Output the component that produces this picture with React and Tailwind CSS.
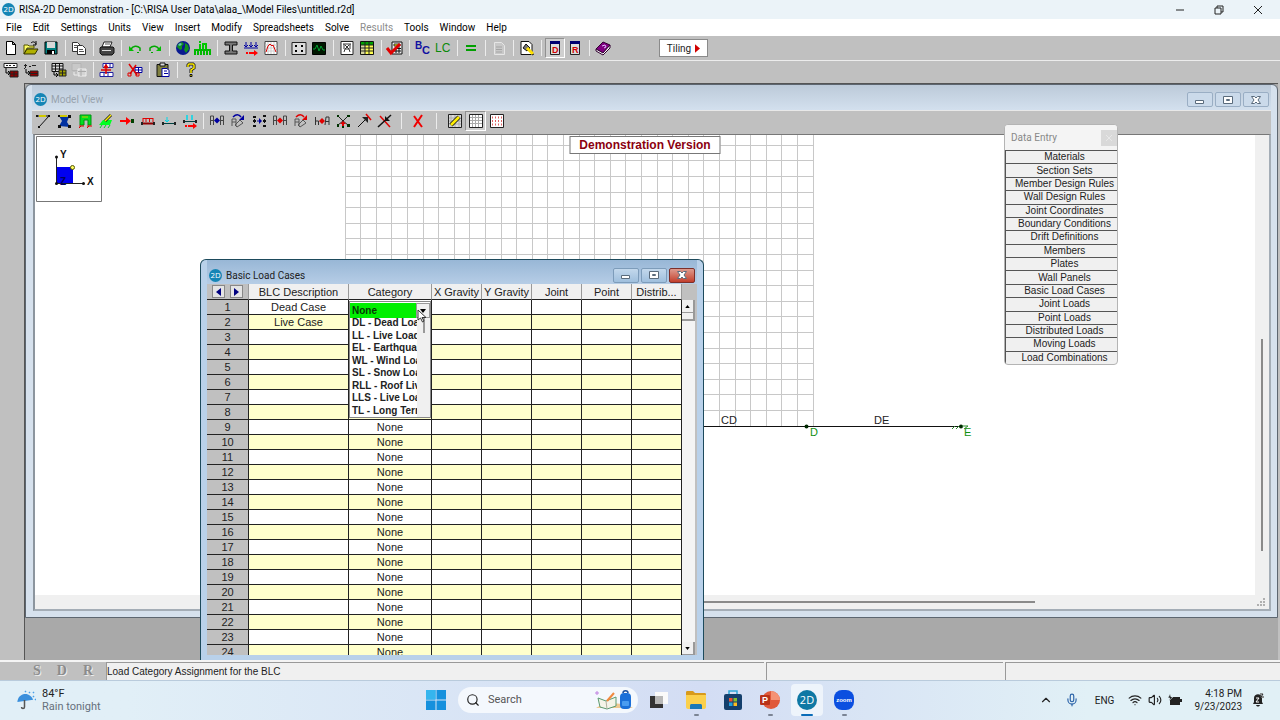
import { useState } from 'react';
import clsx from 'clsx';
import { ChevronUp, Mic, Search, Volume2, Wifi } from 'lucide-react';

const MENU = ['File', 'Edit', 'Settings', 'Units', 'View', 'Insert', 'Modify', 'Spreadsheets', 'Solve', 'Results', 'Tools', 'Window', 'Help'];

const DATA_ENTRY = [
    'Materials',
    'Section Sets',
    'Member Design Rules',
    'Wall Design Rules',
    'Joint Coordinates',
    'Boundary Conditions',
    'Drift Definitions',
    'Members',
    'Plates',
    'Wall Panels',
    'Basic Load Cases',
    'Joint Loads',
    'Point Loads',
    'Distributed Loads',
    'Moving Loads',
    'Load Combinations',
];

const CATEGORIES = [
    'DL - Dead Load',
    'LL - Live Load',
    'EL - Earthquake',
    'WL - Wind Load',
    'SL - Snow Load',
    'RLL - Roof Live',
    'LLS - Live Load',
    'TL - Long Term',
];

const COLUMNS = ['BLC Description', 'Category', 'X Gravity', 'Y Gravity', 'Joint', 'Point', 'Distrib...'];

const ROWS = Array.from({ length: 24 }, (_, i) => ({
    no: i + 1,
    description: ['Dead Case', 'Live Case'][i] || '',
    category: i < 8 ? '' : 'None',
}));

// '|' is a separator
const MAIN_TOOLS = [
    'new', 'open', 'save', '|', 'copy', '|', 'print', '|', 'undo', 'redo', '|', 'globe', 'units', '|',
    'section', 'loads', 'graph', '|', 'joints', 'scope', '|', 'frame', 'sheet', '|', 'solve', '|',
    'bc', 'lc', '|', 'equal', '|', 'report', '|', 'editdoc', '|', 'dataD', 'dataR', '|', 'book',
];
const SHEET_TOOLS = ['fill', 'math', '|', 'insertRow', 'deleteRow', '|', 'sort', '|', 'cut', '|', 'paste', '|', 'help'];
const DRAW_TOOLS = ['member', 'plate', 'wall', 'boundary', 'jointLoad', 'distLoad', 'pointLoad', 'movingLoad'];
const MODIFY_TOOLS = ['copyA', 'rotateA', 'mirror', 'moveA', 'rotateB', 'scaleA', 'merge', 'extend', 'trim'];

const letter = { fontFamily: 'Liberation Sans, Arial, sans-serif', fontWeight: 700 };

const ICONS = {
    new: <path d="M3.5 1.5h6l3 3v10h-9zM9.5 1.5v3h3" fill="#fff" stroke="#000" />,
    open: (
        <>
            <path d="M1 5h4l1 1h5v2H4l-3 6z" fill="#ffff66" stroke="#555500" />
            <path d="M4 9h11l-3 5H1z" fill="#b0b000" stroke="#333300" />
            <path d="M8 3c2-2 4-1 5 1M13 1v4h-3" fill="none" stroke="#000" />
        </>
    ),
    save: (
        <>
            <path d="M2 2h12v12H2z" fill="#008080" stroke="#000" />
            <path d="M4 2h8v6H4z" fill="#d8d8d8" />
            <path d="M4 10h8v4H4z" fill="#000" />
            <path d="M9 11h2v3H9z" fill="#fff" />
        </>
    ),
    copy: (
        <>
            <path d="M1.5 2.5h5l3 3v6h-8z" fill="#fff" stroke="#333" />
            <path d="M3 5.5h3M3 7.5h3" stroke="#555" />
            <path d="M6.5 5.5h5l3 3v6h-8z" fill="#fff" stroke="#333" />
            <path d="M8 9.5h4M8 11.5h5" stroke="#555" />
        </>
    ),
    print: (
        <>
            <path d="M5 2h8l-2 5H3z" fill="#fff" stroke="#222" />
            <path d="M2 7h12l1 1v5l-2 2H3l-2-2V8z" fill="#444" stroke="#111" />
            <path d="M3 10h9v1H3z" fill="#ddd" />
            <path d="M6 4h5" stroke="#555" />
        </>
    ),
    undo: (
        <>
            <path d="M2 6v5h5z" fill="#00c000" />
            <path d="M4 9c2-3 6-4 9-1v3" fill="none" stroke="#00a800" strokeWidth="1.5" />
            <path d="M10 12.500h2" stroke="#00a800" />
        </>
    ),
    redo: (
        <>
            <path d="M14 6v5H9z" fill="#00c000" />
            <path d="M12 9C10 6 6 5 3 8v3" fill="none" stroke="#00a800" strokeWidth="1.5" />
            <path d="M4 12.500h2" stroke="#00a800" />
        </>
    ),
    globe: (
        <>
            <circle cx="8" cy="8" r="7" fill="#0a1a90" />
            <path d="M3 4l4-2 2 2-2 2v3l-2 1-3-3zM10 3l3 2 1 4-3 4-2-3 1-3z" fill="#109020" />
            <path d="M5 3l2 1-2 2-2-1z" fill="#60c0c0" />
        </>
    ),
    units: (
        <>
            <path d="M5 1v2M5 4v5M8 9V4h3v5" fill="none" stroke="#00c800" strokeWidth="2" />
            <path d="M0 15v-5h15v5M3 15v-4M6 15v-4M9 15v-4M12 15v-4" fill="none" stroke="#00b800" strokeWidth="2" />
        </>
    ),
    section: <path d="M2 2h12v3H9.500v6H14v3H2v-3h4.500V5H2z" fill="#777" stroke="#111" />,
    loads: (
        <>
            <path d="M1 8h14M3 2v5M8 2v5M13 2v5M1 5l2 2 2-2M6 5l2 2 2-2M11 5l2 2 2-2" fill="none" stroke="#0000a0" />
            <path d="M3 13h2M6 13h5" stroke="#f00" strokeWidth="2" />
            <path d="M11 10l4 3-4 3z" fill="#f00" />
        </>
    ),
    graph: (
        <>
            <path d="M2 1.500h12v13H2z" fill="#fff" stroke="#444" />
            <path d="M2 5h12M2 8h12M2 11h12M5 2v12M8 2v12M11 2v12" stroke="#ccc" />
            <path d="M3 12l2-6 2-2 2 2 1-1 3 7" fill="none" stroke="#e00000" />
        </>
    ),
    joints: (
        <>
            <path d="M1 2.500h14v12H1z" fill="#ddd" stroke="#222" />
            <path d="M4 5h2v2H4zM10 5h2v2h-2zM4 10h2v2H4zM10 10h2v2h-2z" fill="#000" />
        </>
    ),
    scope: (
        <>
            <path d="M1.500 2.500h13v12h-13z" fill="#001800" stroke="#000" />
            <path d="M2 9h2l2-4 2 6 2-5 2 4h2" fill="none" stroke="#00a030" />
        </>
    ),
    frame: (
        <>
            <path d="M2 1.500h12v13H2z" fill="#fff" stroke="#222" />
            <path d="M4 4h8M5 12l1-3h4l1 3M5 4v5M11 4v5M6 9l4-4M10 9L6 5" fill="none" stroke="#333" />
        </>
    ),
    sheet: (
        <>
            <path d="M1.500 1.500h13v13h-13z" fill="#ffff50" stroke="#111" />
            <path d="M2 2h4v12H2z" fill="#d8d8a0" />
            <path d="M2 2h12v3H2z" fill="#00a000" />
            <path d="M2 5h12M2 8h12M2 11h12M6 2v12M10 2v12" stroke="#222" />
        </>
    ),
    solve: (
        <>
            <path d="M5 2h10v12H5z" fill="#eee" stroke="#111" />
            <path d="M7 4h6v2H7z" fill="#ff0" stroke="#333" />
            <path d="M7 8.500h7M7 11h7M9 7v6M12 7v6" stroke="#111" />
            <path d="M0 8l4 5 9-9" fill="none" stroke="#e00000" strokeWidth="3" />
        </>
    ),
    bc: (
        <g fill="#1010a0" style={letter}>
            <text x="0" y="9" fontSize="10">B</text>
            <text x="7" y="14" fontSize="11">C</text>
        </g>
    ),
    lc: (
        <text x="0" y="12" fontSize="12" fill="#0a8a0a" style={{ ...letter, fontWeight: 400 }}>LC</text>
    ),
    equal: <path d="M3 6h10M3 10h10" stroke="#00a000" strokeWidth="2" />,
    report: (
        <>
            <path d="M3.500 2.500h7l3 3v9h-10z" fill="#c8c8c8" stroke="#e6e6e6" />
            <path d="M5 7h6M5 9.500h6M5 12h6" stroke="#a4a4a4" />
        </>
    ),
    editdoc: (
        <>
            <path d="M2 1.500h8l3 3v10H2z" fill="#fff" stroke="#111" />
            <path d="M4 8l3-4 4 4-3 3z" fill="#777" stroke="#111" />
            <path d="M8 8l6 6" stroke="#ffe000" strokeWidth="3" />
            <path d="M13 15l2-1" stroke="#222" />
        </>
    ),
    dataD: (
        <>
            <path d="M3.500 1.500h9v13h-9z" fill="#ddd" stroke="#222" />
            <path d="M3 1h10v3H3z" fill="#000070" />
            <text x="5" y="13" fontSize="9" fill="#d00000" style={letter}>D</text>
        </>
    ),
    dataR: (
        <>
            <path d="M3.500 1.500h9v13h-9z" fill="#ddd" stroke="#222" />
            <path d="M3 1h10v3H3z" fill="#000070" />
            <text x="5" y="13" fontSize="9" fill="#d00000" style={letter}>R</text>
        </>
    ),
    book: (
        <>
            <path d="M1 9l7-7 7 3-7 8z" fill="#800080" stroke="#300030" />
            <path d="M1 9l7 4 7-8v3l-7 7-7-4z" fill="#fff" stroke="#300030" />
            <path d="M7 6l3-1 1 2-2 1" fill="none" stroke="#e0c0ff" />
        </>
    ),
    fill: (
        <>
            <path d="M1 1.500h13v4H1z" fill="#fff" stroke="#222" />
            <path d="M3 3.500h2M6 3.500h2M10 3.500h2" stroke="#222" />
            <path d="M3 6v5h3M5 9l2 2-2 2" fill="none" stroke="#000" />
            <path d="M7 9h8v6H7z" fill="#900000" stroke="#222" />
            <path d="M7 12h8M11 9v6" stroke="#222" />
        </>
    ),
    math: (
        <>
            <path d="M1 3.500h3M2.500 2v3M6 4.500h2M9 3.500h4M1 7l2-2" stroke="#222" />
            <path d="M3 7v4h3M5 9l2 2-2 2" fill="none" stroke="#000" />
            <path d="M7 9h8v5H7z" fill="#900000" stroke="#222" />
            <path d="M7 11.500h8" stroke="#222" />
        </>
    ),
    insertRow: (
        <>
            <path d="M1 1.500h11v8H1z" fill="#ddd" stroke="#111" />
            <path d="M1 4h11M1 7h11M4.500 1v8M8.500 1v8" stroke="#111" />
            <path d="M3 10v3h3M5 11l2 2-2 2" fill="none" stroke="#000" />
            <path d="M8 8h7v6H8z" fill="#a0a000" stroke="#222" />
            <path d="M8 11h7M11.500 8v6" stroke="#222" />
        </>
    ),
    deleteRow: (
        <>
            <path d="M1 1.500h9v7H1z" fill="#c8c8c8" stroke="#b4b4b4" />
            <path d="M3 10v3h3" fill="none" stroke="#eee" />
            <path d="M7 7h8v7H7z" fill="#d4d4d4" stroke="#eee" />
            <path d="M7 9.500h8M10 7v7" stroke="#aaa" />
        </>
    ),
    sort: (
        <>
            <path d="M4 1.500h10v4H4zM1 10.500h13v4H1z" fill="#fff" stroke="#2020a0" />
            <path d="M7 1v4M11 1v4M5 10v4M9 10v4" stroke="#2020a0" />
            <path d="M2 8h10M7 4v8M5 6l2-3 2 3" fill="none" stroke="#e00000" strokeWidth="1.5" />
        </>
    ),
    cut: (
        <>
            <path d="M8 5.500h7v5H8z" fill="#fff" stroke="#0000a0" />
            <path d="M8 8h7M11.500 5v5" stroke="#0000a0" />
            <path d="M2 2l8 11M9 3L3 12" stroke="#e00000" strokeWidth="1.5" />
            <path d="M1 11h3v3H1zM9 11h3v3H9z" fill="none" stroke="#e00000" />
        </>
    ),
    paste: (
        <>
            <path d="M2 2.500h11v12H2z" fill="#808040" stroke="#111" />
            <path d="M5 1h5v3H5z" fill="#ddd" stroke="#111" />
            <path d="M7 6.500h5l2 2v6H7z" fill="#fff" stroke="#0000a0" />
            <path d="M9 9h3M9 11.500h4" stroke="#0000a0" />
        </>
    ),
    help: (
        <>
            <path d="M5 5V3l1-1h4l1 1v3L8 8v3" fill="none" stroke="#111" strokeWidth="3" />
            <path d="M5 5V3l1-1h4l1 1v3L8 8v3" fill="none" stroke="#ffee00" strokeWidth="1.5" />
            <path d="M7 12.500h2v2H7z" fill="#ffee00" stroke="#111" />
        </>
    ),
    member: (
        <>
            <path d="M2 3h12L4 14" fill="none" stroke="#111" />
            <path d="M4 3h7" stroke="#d0c800" strokeWidth="2" />
            <path d="M1 2h2v2H1zM13 2h2v2h-2zM3 13h2v2H3z" fill="#111" />
        </>
    ),
    plate: (
        <>
            <path d="M3 3l10 1-2 5 3 5-11-1 3-5z" fill="#0030a0" />
            <path d="M4 3h7" stroke="#d0c800" strokeWidth="2" />
            <path d="M2 2h2v2H2zM12 2h3v3h-3zM2 12h3v3H2zM12 12h3v3h-3z" fill="#111" />
        </>
    ),
    wall: (
        <>
            <path d="M3 2h11v10h-3V7H7v5H3z" fill="#00e020" stroke="#009010" />
            <path d="M2 13h5M2 15l2-2M10 13h5M10 15l2-2" stroke="#e00000" />
            <path d="M5 4h6" stroke="#d0c800" />
        </>
    ),
    boundary: (
        <>
            <path d="M1 12l4-5h9l-2 5z" fill="#00ff20" />
            <path d="M2 15l2-3M6 15l2-3M10 15l2-3" stroke="#00d020" />
            <path d="M7 8l6-6" stroke="#222" strokeWidth="3" />
            <path d="M7 8l6-6" stroke="#ffee00" strokeWidth="1.5" />
        </>
    ),
    jointLoad: (
        <>
            <path d="M1 8h7" stroke="#f00" strokeWidth="2" />
            <path d="M7 4l5 4-5 4z" fill="#f00" />
            <path d="M12 6h3v4h-3z" fill="#004000" />
        </>
    ),
    distLoad: (
        <>
            <path d="M3 5.500h10M3 5v4M6 5v4M9.500 5v4M13 5v4" fill="none" stroke="#e00000" />
            <path d="M2 10.500h12" stroke="#900000" strokeWidth="2" />
            <path d="M1 9h2v3H1zM13 9h2v3h-2z" fill="#222" />
        </>
    ),
    pointLoad: (
        <>
            <path d="M6 4v5M4 7l2 2 2-2" fill="none" stroke="#00d8e8" />
            <path d="M2 10.500h12" stroke="#004040" />
            <path d="M1 9h2v3H1zM13 9h2v3h-2z" fill="#222" />
        </>
    ),
    movingLoad: (
        <>
            <path d="M5 2v5M10 2v5" stroke="#00d8e8" strokeWidth="1.5" />
            <path d="M1 8.500h14" stroke="#004040" />
            <path d="M1 7h2v3H1zM13 7h2v3h-2z" fill="#222" />
            <path d="M3 13h2M6 13h5" stroke="#f00" strokeWidth="2" />
            <path d="M11 10l4 3-4 3z" fill="#f00" />
        </>
    ),
    copyA: (
        <>
            <path d="M1.500 12V3h3v9M1.500 7.500h3M11.500 12V3h3v9M11.500 7.500h3" fill="none" stroke="#444" />
            <path d="M8 4.500l3 3-3 3-3-3z" fill="#0000a0" />
        </>
    ),
    rotateA: (
        <>
            <path d="M2 13V6h4v7M2 9h4M7 14l6-4-3-3-5 5z" fill="none" stroke="#555" />
            <path d="M3 4c3-3 6-3 8 0" fill="none" stroke="#0000a0" strokeWidth="1.5" />
            <path d="M14 2v5H9z" fill="#0000a0" />
        </>
    ),
    mirror: (
        <>
            <path d="M2 3h3v2H2zM2 7h3v2H2zM2 12h3v2H2zM12 2h3v2h-3zM12 7h3v2h-3zM12 12h3v2h-3z" fill="#111" />
            <path d="M3.500 3v10M13.500 3v10" stroke="#111" strokeDasharray="1 2" />
            <path d="M6 8h3" stroke="#0000a0" />
            <path d="M8 5l3 3-3 3z" fill="#0000a0" />
        </>
    ),
    moveA: (
        <>
            <path d="M1.500 12V3h3v9M1.500 7.500h3M11.500 12V3h3v9M11.500 7.500h3" fill="none" stroke="#444" />
            <path d="M8 4.500l3 3-3 3-3-3z" fill="#e00000" />
        </>
    ),
    rotateB: (
        <>
            <path d="M2 13V6h4v7M2 9h4M7 14l6-4-3-3-5 5z" fill="none" stroke="#555" />
            <path d="M3 4c3-3 6-3 8 0" fill="none" stroke="#e00000" strokeWidth="1.5" />
            <path d="M14 2v5H9z" fill="#e00000" />
        </>
    ),
    scaleA: (
        <>
            <path d="M1.500 12V4M1.500 8h3v4M11 12l1-8h3v8M11 8.500h4" fill="none" stroke="#333" />
            <path d="M8 5l3 3-3 3-3-3z" fill="#e00000" />
        </>
    ),
    merge: (
        <>
            <path d="M3 3l5 5 5-5M3 12l5-4 5 4" fill="none" stroke="#222" />
            <path d="M2 2h2v2H2zM12 2h3v2h-3zM2 11h2v3H2zM12 11h3v3h-3zM7 13h2v2H7z" fill="#003000" />
            <path d="M8 8l3 3H9v2H7v-2H5z" fill="#e00000" />
        </>
    ),
    extend: (
        <>
            <path d="M2 14l8-8" fill="none" stroke="#111" />
            <path d="M6 4h6v6z" fill="#222" />
            <path d="M10 1l5 6" stroke="#e00000" strokeWidth="1.5" />
        </>
    ),
    trim: (
        <>
            <path d="M3 3l10 11" stroke="#e00000" strokeWidth="1.5" />
            <path d="M1 14L14 2" fill="none" stroke="#111" strokeWidth="1.5" />
            <path d="M8 3v5h5z" fill="#111" />
        </>
    ),
    remove: <path d="M4 3l8 11M12 2L4 14" stroke="#f00000" strokeWidth="2" />,
    drawGrid: (
        <>
            <path d="M1.500 1.500h13v13h-13z" fill="#ddd" stroke="#222" />
            <path d="M4 2v12M8 2v12M12 2v12M2 5h12M2 8h12M2 11h12" stroke="#aaa" />
            <path d="M4 12l8-8" stroke="#222" strokeWidth="4.500" />
            <path d="M4 12l8-8" stroke="#ffee00" strokeWidth="2.500" />
        </>
    ),
    grid: (
        <>
            <path d="M1.500 1.500h13v13h-13z" fill="#fff" stroke="#222" />
            <path d="M4.500 2v12M7.500 2v12M10.500 2v12M2 4.500h12M2 7.500h12M2 10.500h12" stroke="#aaa" />
        </>
    ),
    snap: (
        <>
            <path d="M1.500 1.500h13v13h-13z" fill="#fff" stroke="#222" />
            <path d="M3 4.500h11M3 8h11M3 11.500h11" stroke="#e06060" strokeDasharray="1 2" strokeWidth="2" />
        </>
    ),
};

const ToolButton = ({ name, pressed, className }) => (
    <button
        type="button"
        aria-label={name}
        className={clsx(
            'flex h-5 shrink-0 items-center justify-center',
            pressed && 'border border-t-[#909090] border-r-white border-b-white border-l-[#909090] bg-[#cfcfcf]',
            className
        )}
    >
        <svg viewBox="0 0 16 16" className="h-4 w-4 shrink-0 overflow-visible">
            {ICONS[name]}
        </svg>
    </button>
);

const Separator = ({ className = 'w-2' }) => (
    <div className={clsx('flex h-4 shrink-0 justify-center', className)}>
        <div className="w-px bg-[#ececec]" />
    </div>
);

const Toolbar = ({ tools, className }) => (
    <div className={clsx('flex items-center bg-[#c0c0c0] pl-px', className)}>
        {tools.map((tool, i) =>
            tool === '|' ? <Separator key={i} /> : <ToolButton key={i} name={tool} pressed={tool === 'dataD'} className="w-5" />
        )}
        {tools.includes('book') && (
            <button
                type="button"
                className="ml-[46px] flex h-[18px] w-[49px] items-center justify-center gap-1 border border-[#8a8a8a] bg-white text-[10px] text-[#222]"
            >
                Tiling
                <svg viewBox="0 0 6 10" className="h-[9px] w-[5px]">
                    <path d="M0 0l6 5-6 5z" fill="#d00000" />
                </svg>
            </button>
        )}
    </div>
);

const AppLogo = ({ className = 'h-[13px] w-[13px]' }) => (
    <svg viewBox="0 0 20 20" className={clsx('shrink-0', className)} aria-hidden="true">
        <circle cx="10" cy="10" r="10" fill="#1585b5" />
        <text x="10" y="14" fontSize="12" textAnchor="middle" fill="#fff" fontFamily="Open Sans, sans-serif">2D</text>
    </svg>
);

const WindowButtons = ({ active }) => (
    <div className="flex gap-0.5">
        {['minimize', 'maximize', 'close'].map((kind) => (
            <button
                key={kind}
                type="button"
                aria-label={kind}
                className={clsx(
                    'flex h-[15px] w-[26px] items-center justify-center rounded-xs border',
                    active && kind === 'close'
                        ? 'border-[#7c2f2a] bg-linear-to-b from-[#dd9a8e] to-[#c23c2b]'
                        : active
                          ? 'border-[#7d9cba] bg-linear-to-b from-[#c3d8ec] to-[#9fbfdd]'
                          : 'border-[#9aaec4] bg-[#cbdaea]'
                )}
            >
                <svg viewBox="0 0 12 10" className="h-[10px] w-3" fill="#fff" stroke="#5a6b7c">
                    {kind === 'minimize' && <path d="M1.500 5.500h8v3h-8z" />}
                    {kind === 'maximize' && <path d="M1.500 1.500h9v7h-9zM4.500 4.500h3v1h-3z" />}
                    {kind === 'close' && <path d="M1.500 1.500h3L6 3l1.500-1.500h3L8 5l2.500 3.500h-3L6 7 4.500 8.500h-3L4 5z" />}
                </svg>
            </button>
        ))}
    </div>
);

// grid pitch of the model canvas
const PITCH = 15.6;

const ModelCanvas = () => (
    <div className="relative min-w-0 flex-1 overflow-hidden bg-white">
        <svg className="block h-full w-full" fontFamily="Liberation Sans, Arial, sans-serif">
            <g stroke="#c8c8c8" shapeRendering="crispEdges">
                {Array.from({ length: 31 }, (_, i) => (
                    <line key={i} x1={310 + i * PITCH} x2={310 + i * PITCH} y1="0" y2="291" />
                ))}
                {Array.from({ length: 18 }, (_, i) => (
                    <line key={i} x1="310" x2="778" y1={291 - (i + 1) * PITCH} y2={291 - (i + 1) * PITCH} />
                ))}
            </g>
            <path d="M311 291.500h615" stroke="#111" />
            <circle cx="771.500" cy="291.500" r="2" fill="#002800" />
            <circle cx="926" cy="291.500" r="2" fill="#002800" />
            <path d="M917 294l3-3M921 294l3-3M929 294l4-3h-6" fill="none" stroke="#2e8b2e" />
            <g fontSize="11" fill="#222">
                <text x="686" y="289">CD</text>
                <text x="839" y="289">DE</text>
            </g>
            <g fontSize="11" fill="#119011">
                <text x="775" y="301">D</text>
                <text x="929" y="301">E</text>
            </g>
            {/* axis triad */}
            <path d="M1.500 1.500h65v65h-65z" fill="#fff" stroke="#777" />
            <path d="M21 32h17v16H21z" fill="#0000f0" />
            <path d="M21.500 22v26.500h27" fill="none" stroke="#222" />
            <circle cx="21.500" cy="22" r="1.500" fill="#111" />
            <circle cx="21.500" cy="48.500" r="1.500" fill="#111" />
            <circle cx="48.500" cy="48.500" r="1.500" fill="#111" />
            <circle cx="37.500" cy="32.500" r="2" fill="#ffff60" stroke="#555500" />
            <g fontSize="10" fontWeight="700" fill="#111">
                <text x="25" y="23">Y</text>
                <text x="52" y="50">X</text>
                <text x="25" y="50" fill="#000060">Z</text>
            </g>
        </svg>
        <div className="absolute top-px left-1/2 h-[18px] w-[151px] -translate-x-1/2 border border-[#777] bg-white text-center font-['Liberation_Sans',Arial,sans-serif] text-xs leading-4 font-bold whitespace-nowrap text-[#8b0010]">
            Demonstration Version
        </div>
    </div>
);

const ModelView = () => (
    <section className="mb-[42px] flex min-h-0 flex-1 flex-col rounded-t-md border border-[#5d6670] bg-[#d6e1ed] px-1.5 pb-1.5">
        <header className="flex h-[25px] shrink-0 items-center gap-1 bg-linear-to-b from-[#bccad9] to-[#d3e0ee] px-0.5 pt-1">
            <AppLogo />
            <h2 className="flex-1 text-[10px] text-[#98a3ae]">Model View</h2>
            <WindowButtons />
        </header>
        <div className="flex h-6 shrink-0 items-center border-t border-[#e8e8e8] bg-[#c0c0c0] pb-1">
            {DRAW_TOOLS.map((t) => <ToolButton key={t} name={t} className="w-[21px]" />)}
            <Separator className="w-1.5" />
            {MODIFY_TOOLS.map((t) => <ToolButton key={t} name={t} className="w-[21px]" />)}
            <Separator className="w-3" />
            <ToolButton name="remove" className="w-[21px]" />
            <Separator className="w-4" />
            <ToolButton name="drawGrid" className="w-[21px]" />
            <ToolButton name="grid" pressed className="w-[21px]" />
            <ToolButton name="snap" className="w-[21px]" />
        </div>
        <div className="ml-px flex min-h-0 flex-1 flex-col border-2 border-t border-[#a4adb6] border-t-[#777] border-l-[#8c959e] bg-[#f0f0f0]">
            <div className="flex min-h-0 flex-1">
                <ModelCanvas />
                <div className="flex w-[14px] flex-col items-center">
                    <div className="flex-[204]" />
                    <div className="w-0.5 flex-[212] bg-[#8a8a8a]" />
                    <div className="flex-[44]" />
                </div>
            </div>
            <div className="flex h-[14px] items-center">
                <div className="flex-[420]" />
                <div className="h-0.5 flex-[582] bg-[#8a8a8a]" />
                <div className="flex flex-[231] justify-end pr-1">
                    <svg viewBox="0 0 8 8" className="h-2 w-2" fill="#b0b0b0">
                        <path d="M6 0h2v2H6zM6 3h2v2H6zM6 6h2v2H6zM3 3h2v2H3zM3 6h2v2H3zM0 6h2v2H0z" />
                    </svg>
                </div>
            </div>
        </div>
    </section>
);

const DataEntry = () => (
    <aside className="absolute top-10 right-[160px] w-[114px] overflow-hidden rounded-sm border border-[#b4b4b4] bg-[#f0f0f0]">
        <header className="flex h-[25px] items-center justify-between bg-[#f4f4f4] pl-1.5 text-[10px] text-[#888]">
            Data Entry
            <button type="button" aria-label="Close Data Entry" className="flex h-4 w-4 items-center justify-center bg-[#d9d9d9] text-[#e8e8e8]">
                <svg viewBox="0 0 8 8" className="h-2 w-2" stroke="currentColor">
                    <path d="M1 1l6 6M7 1L1 7" />
                </svg>
            </button>
        </header>
        <div className="grid h-[214px] auto-rows-fr border-l border-[#555] font-['Liberation_Sans',Arial,sans-serif] text-[10px] leading-3 text-[#222]">
            {DATA_ENTRY.map((item) => (
                <button key={item} type="button" className="border-t border-[#555] pl-1.5 whitespace-nowrap">
                    {item}
                </button>
            ))}
        </div>
    </aside>
);

const CategoryPicker = () => {
    const [category, setCategory] = useState('None');

    return (
        <div className="absolute top-px left-0 z-10 h-[117px] w-[82px] border border-[#888] bg-white text-left text-[10px] font-bold text-[#222]">
            <div className="relative z-10 flex h-4 bg-white pt-px">
                <select
                    aria-label="Category"
                    value={category}
                    onChange={(e) => setCategory(e.target.value)}
                    className="h-[15px] w-[66px] appearance-none bg-[#00f000] pl-0.5 text-[10px] leading-[15px] font-bold text-[#063806]"
                >
                    <option>None</option>
                    {CATEGORIES.map((c) => <option key={c}>{c}</option>)}
                </select>
                <div className="flex flex-1 items-center justify-center border border-[#999] bg-[#f0f0f0]">
                    <svg viewBox="0 0 6 4" className="h-1 w-1.5">
                        <path d="M0 0h6L3 4z" fill="#000" />
                    </svg>
                </div>
            </div>
            <div className="-mt-px flex h-[100px]">
                <ul role="listbox" aria-label="Categories" className="grid w-[67px] auto-rows-fr overflow-hidden pl-0.5 leading-3">
                    {CATEGORIES.map((c) => (
                        <li key={c} role="option" aria-selected={c === category} className="whitespace-nowrap" onClick={() => setCategory(c)}>
                            {c}
                        </li>
                    ))}
                </ul>
                <div className="flex flex-1 justify-center bg-[#f0f0f0]">
                    <div className="h-4 w-0.5 bg-[#999]" />
                </div>
            </div>
            {/* mouse pointer */}
            <svg viewBox="0 0 10 14" className="absolute top-[7px] left-[67px] z-20 h-[14px] w-[10px]">
                <path d="M1 1v10l2.500-2 2 4 1.500-1-2-3.500H9z" fill="#fff" stroke="#333" />
            </svg>
        </div>
    );
};

const ScrollButton = ({ up }) => (
    <button
        type="button"
        aria-label={up ? 'Scroll up' : 'Scroll down'}
        className="flex h-[13px] items-center justify-center border-r-2 border-b border-[#999] bg-[#f0f0f0]"
    >
        <svg viewBox="0 0 6 4" className="h-[3px] w-[5px]">
            <path d={up ? 'M0 4h6L3 0z' : 'M0 0h6L3 4z'} fill="#000" />
        </svg>
    </button>
);

const BasicLoadCases = () => (
    <section className="absolute top-[175px] bottom-0 left-[175px] flex w-[504px] flex-col rounded-t-md border border-b-0 border-[#1d4a5c] bg-[#b9d1ea] px-1.5 pb-[5px]">
        <header className="flex h-[24px] shrink-0 items-center gap-1 bg-linear-to-b from-[#98b7d6] to-[#b6cde6] px-0.5 pt-1.5">
            <AppLogo />
            <h2 className="flex-1 text-[10px] text-[#222]">Basic Load Cases</h2>
            <WindowButtons active />
        </header>
        <div className="flex min-h-0 flex-1 overflow-hidden bg-[#c0c0c0]">
            <div className="min-h-0 overflow-hidden">
                <table className="w-[475px] table-fixed border-separate border-spacing-0 text-center font-['Liberation_Sans',Arial,sans-serif] text-[11px] leading-[14px] text-[#222]">
                    <colgroup>
                        <col className="w-[42px]" />
                        <col className="w-[100px]" />
                        <col className="w-[83px]" />
                        {COLUMNS.slice(2).map((c) => <col key={c} className="w-[50px]" />)}
                    </colgroup>
                    <thead>
                        <tr className="h-4">
                            <th className="border-r border-b border-[#222] border-r-[#999] bg-[#c0c0c0] p-0">
                                <div className="flex justify-center gap-[5px]">
                                    {['M6 0v8L1 4z', 'M1 0v8l5-4z'].map((d) => (
                                        <button key={d} type="button" aria-label="Change page" className="flex h-[13px] w-[13px] items-center justify-center border border-[#888] bg-[#e4e4e4]">
                                            <svg viewBox="0 0 7 8" className="h-2 w-[7px]">
                                                <path d={d} fill="#000080" />
                                            </svg>
                                        </button>
                                    ))}
                                </div>
                            </th>
                            {COLUMNS.map((c) => (
                                <th key={c} className="border-r border-b border-[#999] border-b-[#222] bg-[#f0f0f0] p-0 font-normal whitespace-nowrap">
                                    {c}
                                </th>
                            ))}
                        </tr>
                    </thead>
                    <tbody>
                        {ROWS.map((row) => (
                            <tr key={row.no} className="h-[15px] bg-white even:bg-[#ffffcc]">
                                <th scope="row" className="border-r border-b border-[#222] bg-[#c0c0c0] p-0 font-normal">{row.no}</th>
                                <td className="border-r border-b border-[#222] p-0">{row.description}</td>
                                <td className="relative border-r border-b border-[#222] p-0">
                                    {row.no === 1 ? <CategoryPicker /> : row.category}
                                </td>
                                {COLUMNS.slice(2).map((c) => <td key={c} className="border-r border-b border-[#222] p-0" />)}
                            </tr>
                        ))}
                    </tbody>
                </table>
            </div>
            <div className="mt-4 flex w-[13px] flex-col bg-[#f4f4f4]">
                <ScrollButton up />
                <div className="h-2 border-r-2 border-b-2 border-[#999] bg-[#f0f0f0]" />
                <div className="flex-1" />
                <ScrollButton />
            </div>
        </div>
    </section>
);

const StatusBar = () => (
    <footer className="flex h-5 shrink-0 border-t-2 border-[#f4f4f4] bg-[#f0f0f0] font-['Liberation_Sans',Arial,sans-serif] text-[10px] leading-[18px] text-[#222]">
        <div className="flex w-[106px] gap-4 bg-[#c0c0c0] pl-[33px] font-['Liberation_Serif',serif] text-sm leading-[18px] font-bold text-[#8c8c8c] text-shadow-[1px_1px_0_#eee]">
            <span>S</span>
            <span>D</span>
            <span>R</span>
        </div>
        <div className="flex-1 border-t border-l border-[#999]">Load Category Assignment for the BLC</div>
        <div className="ml-0.5 w-[237px] border-t border-l border-[#999]" />
        <div className="ml-0.5 w-[275px] border-t border-l border-[#999]" />
    </footer>
);

const TaskIcon = ({ label, active, running, children }) => (
    <button
        type="button"
        aria-label={label}
        className={clsx('flex h-8 w-8 shrink-0 flex-col items-center rounded-sm pt-1.5', active && 'bg-[#eef4fb]')}
    >
        <svg viewBox="0 0 20 20" className="h-5 w-5 shrink-0">{children}</svg>
        <span
            className={clsx(
                'mt-1 h-0.5 shrink-0 rounded-full',
                active ? 'w-3 bg-[#0a6cb8]' : 'w-[5px]',
                running && !active && 'bg-[#7b8494]'
            )}
        />
    </button>
);

const Taskbar = () => (
    <nav className="flex h-10 shrink-0 items-center border-t border-[#b9cbdc] bg-linear-to-r from-[#e1eff7] from-10% via-[#d3ddf4] via-55% to-[#e1f0f6] to-85% pb-px text-[11px] text-[#222]">
        <div className="flex flex-1 items-center gap-1.5 pl-4">
            <svg viewBox="0 0 20 20" className="h-5 w-5">
                <path d="M1 11c1-5 5-7 8-7 4 0 7 3 8 7z" fill="#3a8fdc" transform="rotate(-8 9 9)" />
                <path d="M8.500 10v7c0 2-3 2-3 0" fill="none" stroke="#555" strokeWidth="1.500" />
                <path d="M9 2l1-1M13 3l1-1M17 3l1-1M17 7l1-1M19 10l1-1" stroke="#4aa0e8" strokeWidth="1.500" />
            </svg>
            <div className="leading-[13px]">
                <div>84°F</div>
                <div className="text-[#66707c]">Rain tonight</div>
            </div>
        </div>
        <div className="flex items-center gap-[5px]">
            <button type="button" aria-label="Start" className="flex h-8 w-8 items-center justify-center">
                <svg viewBox="0 0 20 20" className="h-5 w-5">
                    <path d="M0 0h9.500v9.500H0zM10.500 0H20v9.500h-9.500zM0 10.500h9.500V20H0zM10.500 10.500H20V20h-9.500z" fill="#1590dd" />
                    <path d="M0 0h9.500v9.500H0z" fill="#35b5ee" />
                </svg>
            </button>
            <label className="ml-px flex h-[26px] w-[180px] items-center gap-2 rounded-full bg-[#f4f8fd] pr-1 pl-2">
                <Search className="h-[14px] w-[14px] shrink-0 text-[#222]" />
                <input type="search" placeholder="Search" aria-label="Search" className="w-0 min-w-0 flex-1 text-[11px] outline-none placeholder:text-[#555]" />
                <svg viewBox="0 0 40 22" className="h-[22px] w-10 shrink-0">
                    <path d="M2 19c8-6 28-6 37 0z" fill="#f0c890" />
                    <path d="M4 9l8 3 10-4v9l-9 3-7-2z" fill="#f4f4e8" stroke="#5a9a70" />
                    <path d="M12 12l1 8" stroke="#b0b0a0" />
                    <path d="M13 12l7-8" stroke="#f08a40" strokeWidth="2" />
                    <path d="M3 2v4M1 4h4" stroke="#c080e0" />
                    <rect x="26" y="4" width="11" height="16" rx="4" fill="#1a6fd8" />
                    <path d="M29 4c0-3 5-3 5 0" fill="none" stroke="#1a50a0" strokeWidth="1.500" />
                    <rect x="28" y="12" width="7" height="5" rx="1" fill="#4a9cf0" />
                </svg>
            </label>
            <TaskIcon label="Task view">
                <path d="M6 2h13v12H6z" fill="#fafafa" />
                <path d="M1 6h13v12H1z" fill="#333" />
                <path d="M6 6h8v8H6z" fill="#b8b8b8" />
            </TaskIcon>
            <TaskIcon label="File Explorer" running>
                <path d="M0 3c0-1 0-2 1-2h6l2 2h10c1 0 1 1 1 2v3H0z" fill="#d89a1c" />
                <path d="M0 5h20v12c0 1-1 2-2 2H2c-1 0-2-1-2-2z" fill="#fbd04c" />
                <path d="M4 19v-3c0-2 1-2 2-2h8c1 0 2 0 2 2v3z" fill="#1a78b8" />
            </TaskIcon>
            <TaskIcon label="Microsoft Store">
                <path d="M6 5V1h8v4" fill="none" stroke="#30a8d8" strokeWidth="1.500" />
                <rect x="1" y="4" width="18" height="16" rx="2" fill="#143f6c" />
                <path d="M6 8h3.500v3.500H6z" fill="#f05030" />
                <path d="M10.500 8H14v3.500h-3.500z" fill="#80c030" />
                <path d="M6 12.500h3.500V16H6z" fill="#20a0e0" />
                <path d="M10.500 12.500H14V16h-3.500z" fill="#fbbc20" />
            </TaskIcon>
            <TaskIcon label="PowerPoint" running>
                <circle cx="11" cy="10" r="9" fill="#e0593a" />
                <path d="M11 1a9 9 0 0 1 9 9h-9z" fill="#f59274" />
                <rect x="0" y="5" width="10" height="10" rx="1" fill="#b83218" />
                <text x="2" y="13" fontSize="9" fill="#fff" style={letter}>P</text>
            </TaskIcon>
            <TaskIcon label="RISA-2D" active running>
                <circle cx="10" cy="10" r="10" fill="#0f78a4" />
                <text x="10" y="14" fontSize="11" textAnchor="middle" fill="#fff" fontFamily="Open Sans, sans-serif">2D</text>
            </TaskIcon>
            <TaskIcon label="Zoom" running>
                <rect x="0" y="0" width="20" height="20" rx="8" fill="#0b4fe0" />
                <text x="10" y="12" fontSize="6" textAnchor="middle" fill="#fff" style={letter}>zoom</text>
            </TaskIcon>
        </div>
        <div className="flex flex-1 items-center justify-end pr-4">
            <ChevronUp className="h-[14px] w-[14px]" />
            <Mic className="ml-3 h-[14px] w-[14px] text-[#2a62a8]" />
            <span className="ml-4 text-[10px]">ENG</span>
            <Wifi className="ml-[14px] h-[14px] w-[14px]" />
            <Volume2 className="ml-1.5 h-[14px] w-[14px]" />
            <svg viewBox="0 0 14 12" className="ml-1.5 h-3 w-[14px]">
                <path d="M2 3h10v8H2zM12 5h2v3h-2z" fill="#222" />
                <path d="M2 0L0 4h2l-1 3 4-4H3z" fill="#222" stroke="#e1f0f6" strokeWidth="0.500" />
            </svg>
            <div className="ml-3 text-right text-[10px] leading-[13px]">
                <div>4:18 PM</div>
                <div>9/23/2023</div>
            </div>
            <svg viewBox="0 0 12 14" className="ml-2.5 h-[14px] w-3">
                <path d="M1 11l1-2V5c0-5 8-5 8 0v4l1 2zM4 12h4c-1 2-3 2-4 0z" fill="#222" />
                <path d="M8 1h3L9 4h3M4 5h3L4 9h3" fill="none" stroke="#fff" />
                <path d="M8 1h3L9 4h3" fill="none" stroke="#222" />
            </svg>
        </div>
    </nav>
);

export default function App() {
    return (
        <div className="flex h-screen min-h-[480px] flex-col overflow-hidden bg-[#c0c0c0] font-[Roboto,'Noto_Sans',sans-serif]">
            <header className="flex h-[19px] shrink-0 items-center gap-1 bg-[#ebf3f8] pl-0.5">
                <AppLogo />
                <h1 className="flex-1 text-[10px] whitespace-nowrap text-black">
                    RISA-2D Demonstration - [C:\RISA User Data\alaa_\Model Files\untitled.r2d]
                </h1>
                <div className="flex gap-[18px] pr-3">
                    {['M2 6h8', 'M2 4h6v6H2zM4 4V2h6v6H8', 'M2 2l8 8M10 2l-8 8'].map((d, i) => (
                        <button key={d} type="button" aria-label={['Minimize', 'Restore', 'Close'][i]} className="flex w-[21px] justify-center">
                            <svg viewBox="0 0 12 12" className="h-3 w-3" fill="none" stroke="#222">
                                <path d={d} />
                            </svg>
                        </button>
                    ))}
                </div>
            </header>

            <nav className="flex h-[17px] shrink-0 items-center gap-[11px] bg-white pl-1.5 text-[10px] text-black">
                {MENU.map((item) => (
                    <button key={item} type="button" className={item === 'Results' ? 'text-[#8c8c8c]' : ''}>
                        {item}
                    </button>
                ))}
            </nav>

            <Toolbar tools={MAIN_TOOLS} className="h-[25px] shrink-0 border-b border-[#ececec]" />
            <Toolbar tools={SHEET_TOOLS} className="h-[22px] shrink-0 pb-1" />

            {/* MDI area */}
            <main className="flex min-h-0 flex-1 pl-6">
                <div className="relative mr-0.5 flex min-w-0 flex-1 flex-col overflow-hidden border-t border-l border-[#555] bg-[#a9a9a9]">
                    <ModelView />
                    <DataEntry />
                    <BasicLoadCases />
                </div>
            </main>

            <StatusBar />
            <Taskbar />
        </div>
    );
}
